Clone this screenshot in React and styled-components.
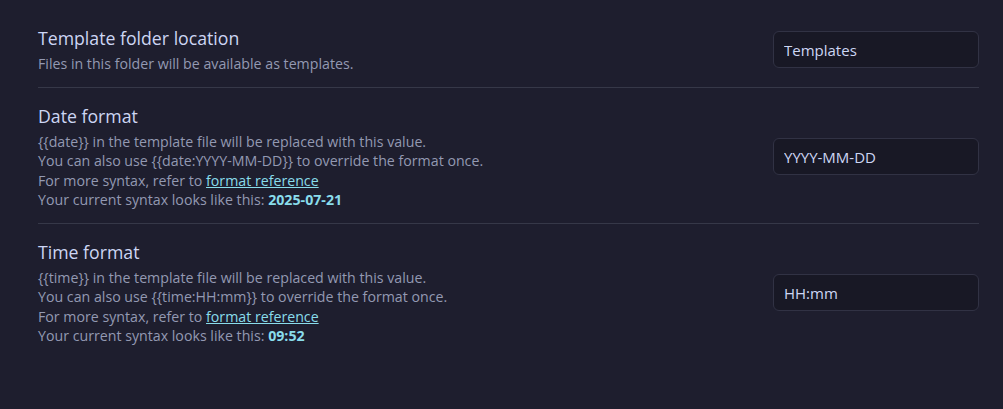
import React from "react";
import styled, { createGlobalStyle } from "styled-components";

const Global = createGlobalStyle`
  html, body { margin: 0; padding: 0; background: #1e1e2e; }
  body { font-family: "Open Sans", "Noto Sans", sans-serif; -webkit-font-smoothing: antialiased; }
`;

const Page = styled.div`
  background: #1e1e2e;
  min-height: 409px;
  box-sizing: border-box;
  padding: 10px 24px 0 38px;
`;

const Item = styled.div`
  display: flex;
  align-items: center;
  gap: 24px;
  padding: 16px 0 13px;
  border-top: ${(p) => (p.$first ? "none" : "1px solid #363848")};
`;

const Info = styled.div`
  flex: 1;
  display: flex;
  flex-direction: column;
  gap: 4px;
`;

const Name = styled.div`
  color: #cdd6f4;
  font-size: 17.7px;
  line-height: 24px;
`;

const Desc = styled.div`
  color: #9399b2;
  font-size: 14.2px;
  line-height: 19.5px;
`;

const Link = styled.a`
  color: #89dceb;
  text-decoration: underline;
  cursor: pointer;
`;

const Value = styled.b`
  color: #89dceb;
  font-weight: 700;
`;

const Input = styled.input`
  box-sizing: border-box;
  width: 206px;
  height: 37px;
  background: #181825;
  border: 1px solid #313244;
  border-radius: 6px;
  padding: 0 10px;
  color: #cdd6f4;
  font-family: "Open Sans", "Noto Sans", sans-serif;
  font-size: 15px;
  outline: none;
`;

export default function App() {
  return (
    <>
      <Global />
      <Page>
        <Item $first>
          <Info>
            <Name>Template folder location</Name>
            <Desc>Files in this folder will be available as templates.</Desc>
          </Info>
          <Input defaultValue="Templates" />
        </Item>
        <Item>
          <Info>
            <Name>Date format</Name>
            <Desc>
              {"{{date}} in the template file will be replaced with this value."}
              <br />
              {"You can also use {{date:YYYY-MM-DD}} to override the format once."}
              <br />
              For more syntax, refer to <Link>format reference</Link>
              <br />
              Your current syntax looks like this: <Value>2025-07-21</Value>
            </Desc>
          </Info>
          <Input defaultValue="YYYY-MM-DD" />
        </Item>
        <Item>
          <Info>
            <Name>Time format</Name>
            <Desc>
              {"{{time}} in the template file will be replaced with this value."}
              <br />
              {"You can also use {{time:HH:mm}} to override the format once."}
              <br />
              For more syntax, refer to <Link>format reference</Link>
              <br />
              Your current syntax looks like this: <Value>09:52</Value>
            </Desc>
          </Info>
          <Input defaultValue="HH:mm" />
        </Item>
      </Page>
    </>
  );
}
